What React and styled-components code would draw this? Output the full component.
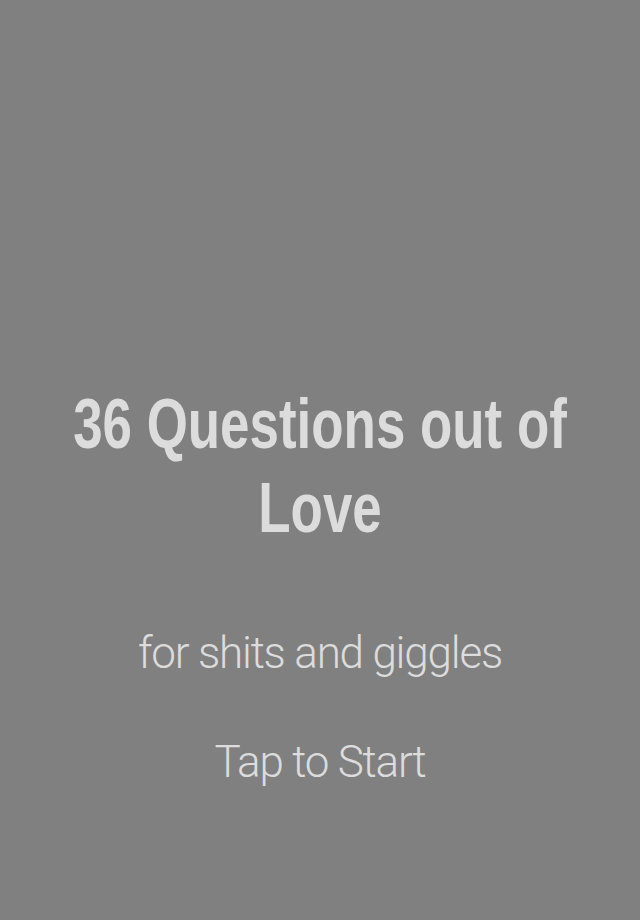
import React from 'react'
import styled, { createGlobalStyle } from 'styled-components'

const GlobalStyle = createGlobalStyle`
  html, body {
    margin: 0;
    padding: 0;
    background: #808080;
  }
`

const Screen = styled.div`
  display: flex;
  flex-direction: column;
  align-items: center;
  height: 920px;
  padding-top: 382px;
  box-sizing: border-box;
  overflow: hidden;
  background: #808080;
  color: #dcdcdc;
  cursor: pointer;
`

// no condensed Helvetica available, so squeeze Liberation Sans Bold
const Title = styled.h1`
  flex: none;
  margin: 0;
  width: 690px;
  text-align: center;
  font-family: "Liberation Sans", Arial, sans-serif;
  font-weight: 700;
  font-size: 71px;
  line-height: 84px;
  transform: scaleX(0.745);
  transform-origin: center;
`

const Subtitle = styled.p`
  margin: ${({ $top }) => $top}px 0 0;
  font-family: Roboto, "Liberation Sans", sans-serif;
  font-weight: 300;
  font-size: 44px;
  line-height: 52px;
  letter-spacing: -1.2px;
`

const App = () => {
  return (
    <>
      <GlobalStyle />
      <Screen>
        <Title>36 Questions out of Love</Title>
        <Subtitle $top={77}>for shits and giggles</Subtitle>
        <Subtitle $top={57}>Tap to Start</Subtitle>
      </Screen>
    </>
  )
}

export default App
